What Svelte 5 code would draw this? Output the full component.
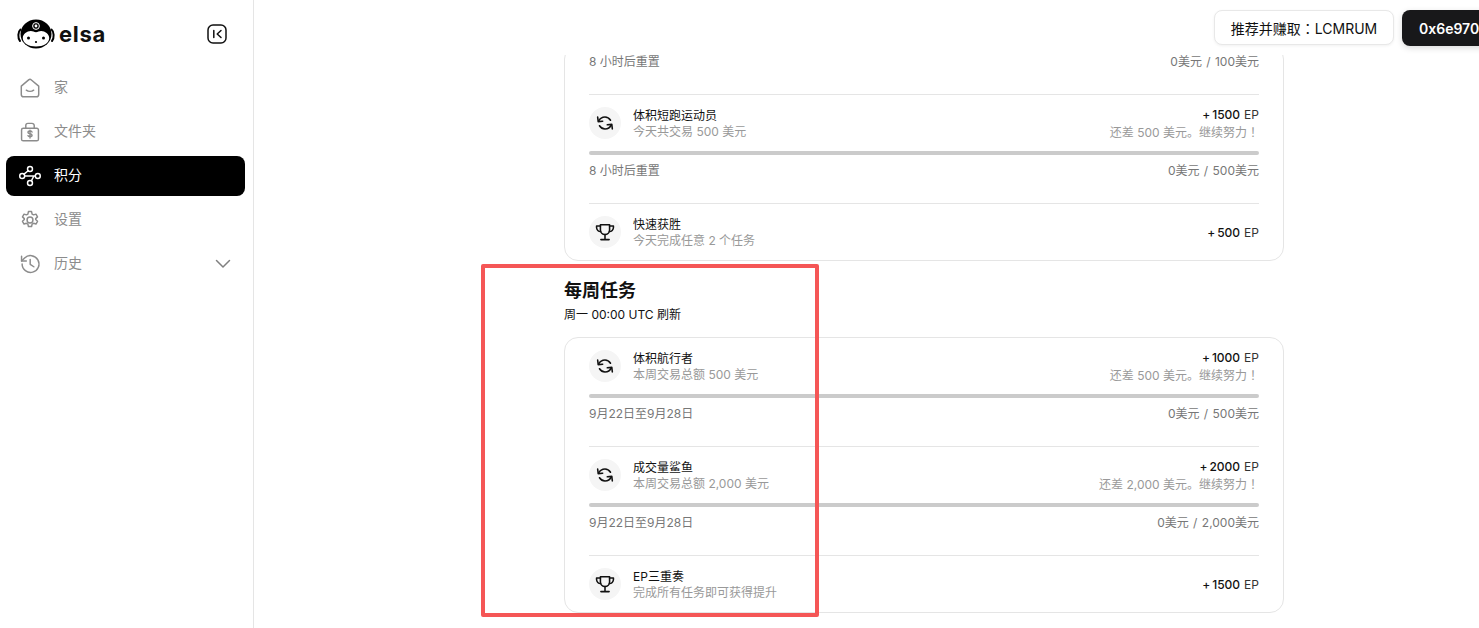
<script>
  const navItems = [
    { key: 'home', label: '家' },
    { key: 'folder', label: '文件夹' },
    { key: 'points', label: '积分', active: true },
    { key: 'settings', label: '设置' },
    { key: 'history', label: '历史', chevron: true }
  ];

  const dailyTasks = [
    { icon: 'swap', title: '体积短跑运动员', sub: '今天共交易 500 美元', ep: '1500', hint: '还差 500 美元。继续努力', left: '8 小时后重置', right: '0美元 / 500美元' },
    { icon: 'trophy', title: '快速获胜', sub: '今天完成任意 2 个任务', ep: '500' }
  ];

  const weeklyTasks = [
    { icon: 'swap', title: '体积航行者', sub: '本周交易总额 500 美元', ep: '1000', hint: '还差 500 美元。继续努力', left: '9月22日至9月28日', right: '0美元 / 500美元' },
    { icon: 'swap', title: '成交量鲨鱼', sub: '本周交易总额 2,000 美元', ep: '2000', hint: '还差 2,000 美元。继续努力', left: '9月22日至9月28日', right: '0美元 / 2,000美元' },
    { icon: 'trophy', title: 'EP三重奏', sub: '完成所有任务即可获得提升', ep: '1500' }
  ];
</script>

{#snippet navIcon(key)}
  <svg class="nav-icon" viewBox="0 0 24 24" fill="none" stroke="currentColor" stroke-width="1.6" stroke-linecap="round" stroke-linejoin="round">
    {#if key === 'home'}
      <path d="M2.500 10 10.500 3.200a2.300 2.300 0 0 1 3 0L21.500 10V19a2.600 2.600 0 0 1-2.600 2.600H5.100A2.600 2.600 0 0 1 2.500 19Z"/>
      <path d="M8 14.400c2.200 1.700 5.800 1.700 8 0"/>
    {:else if key === 'folder'}
      <path d="M4.600 8h14.800A1.800 1.800 0 0 1 21.200 9.800v10a1.800 1.800 0 0 1-1.800 1.800H4.600a1.800 1.800 0 0 1-1.800-1.800v-10A1.800 1.800 0 0 1 4.600 8Z"/>
      <path d="M7.400 8V5a2.400 2.400 0 0 1 2.400-2.400h4.400A2.400 2.400 0 0 1 16.600 5v3"/>
      <path d="M14.200 12c-.4-.7-1.200-1-2.200-1-1.300 0-2.200.6-2.200 1.500s.9 1.300 2.200 1.500 2.200.7 2.200 1.600-.9 1.500-2.200 1.500c-1 0-1.800-.4-2.200-1.100M12 10v8.600"/>
    {:else if key === 'points'}
      <circle cx="3.500" cy="12" r="2.700"/>
      <circle cx="20.500" cy="12" r="2.700"/>
      <circle cx="12" cy="4.400" r="2.700"/>
      <circle cx="12" cy="19.600" r="2.700"/>
      <path d="M6.200 12h11.600M10 6.300 5.500 10M13.500 17.300 16.200 12"/>
    {:else if key === 'settings'}
      <path d="M10.300 2.800h3.400l.6 2.700 1.600.9 2.600-.8 1.700 3-2 1.900v1l2 1.900-1.700 3-2.600-.8-1.600.9-.6 2.700h-3.400l-.6-2.700-1.600-.9-2.600.8-1.700-3 2-1.900v-1l-2-1.900 1.700-3 2.600.8 1.600-.9Z"/>
      <circle cx="12" cy="12" r="3.200"/>
    {:else}
      <path d="M3.400 12a9.200 9.200 0 1 0 2.700-6.500L2.800 8.800"/>
      <path d="M2.800 3.600v5.200H8"/>
      <path d="M12.200 7.200v5.200l4 2.600"/>
    {/if}
  </svg>
{/snippet}

{#snippet taskIcon(kind)}
  <span class="task-icon">
    <svg viewBox="0 0 24 24" width="22" height="22" fill="none" stroke="#111" stroke-width="1.700" stroke-linecap="round" stroke-linejoin="round">
      {#if kind === 'swap'}
        <path d="M18 9C16.500 6.600 14.500 5.500 12 5.500 9 5.500 6.500 7 5 10"/>
        <path d="M4 5.500 4.600 10.500 9.500 10"/>
        <path d="M6 15C7.500 17.400 9.500 18.500 12 18.500 15 18.500 17.500 17 19 14"/>
        <path d="M20 18.500 19.400 13.500 14.500 14"/>
      {:else}
        <path d="M7 4h10v5.800a5 5 0 0 1-10 0Z"/>
        <path d="M7 5.500H2.800v1.700A4.300 4.300 0 0 0 7.300 11.500M17 5.500h4.200v1.700a4.300 4.300 0 0 1-4.500 4.300"/>
        <path d="M12 14.800v5M7.500 20.300h9"/>
      {/if}
    </svg>
  </span>
{/snippet}

{#snippet taskRow(task)}
  <div class="task">
    <div class="task-head">
      {@render taskIcon(task.icon)}
      <div class="task-text">
        <div class="task-title">{task.title}</div>
        <div class="task-sub">{task.sub}</div>
      </div>
      <div class="task-reward">
        <div class="ep"><span class="ep-plus">+</span><span class="ep-num">{task.ep}</span><span class="ep-unit">EP</span></div>
        {#if task.hint}<div class="hint">{task.hint}<span class="tc">！</span></div>{/if}
      </div>
    </div>
    {#if task.left}
      <div class="bar"></div>
      <div class="task-foot">
        <span>{task.left}</span>
        <span class="amount">{task.right}</span>
      </div>
    {/if}
  </div>
{/snippet}

<div class="page">
  <aside class="sidebar">
    <div class="brand">
      <svg class="logo" viewBox="0 0 38 30" width="38" height="30">
        <path d="M3.500 10.500C1 12.500.5 19 3 22" fill="none" stroke="#000" stroke-width="2" stroke-linecap="round"/>
        <path d="M34.500 10.500C37 12.500 37.500 19 35 22" fill="none" stroke="#000" stroke-width="2" stroke-linecap="round"/>
        <ellipse cx="19" cy="15" rx="15.500" ry="14.500" fill="#000"/>
        <path d="M5.800 19c0-4 4.200-7 8-7 2 0 3.500 1.200 5.200 1.200S22.200 12 24.200 12c3.800 0 8 3 8 7 0 5-5.800 8.500-13.200 8.500S5.800 24 5.800 19Z" fill="#fff"/>
        <circle cx="19" cy="7" r="3.400" fill="none" stroke="#fff" stroke-width="1"/>
        <circle cx="19" cy="7" r="1.400" fill="#fff"/>
        <circle cx="11.500" cy="19" r="1.500" fill="#000"/>
        <circle cx="26.500" cy="19" r="1.500" fill="#000"/>
        <circle cx="19" cy="23" r="1.100" fill="#000"/>
      </svg>
      <span class="wordmark">elsa</span>
      <button type="button" class="collapse" aria-label="Collapse sidebar">
        <svg viewBox="0 0 20 20" width="20" height="20" fill="none" stroke="#111" stroke-width="1.500" stroke-linecap="round" stroke-linejoin="round">
          <rect x="1" y="1" width="18" height="18" rx="5"/>
          <path d="M6.800 6.500v7M14 6.500 10.200 10l3.800 3.500"/>
        </svg>
      </button>
    </div>
    <nav class="nav">
      {#each navItems as item}
        <div class="nav-item" class:active={item.active}>
          {@render navIcon(item.key)}
          <span>{item.label}</span>
          {#if item.chevron}
            <svg class="chevron" viewBox="0 0 16 10" width="16" height="10" fill="none" stroke="#808080" stroke-width="1.500" stroke-linecap="round" stroke-linejoin="round"><path d="M1.500 1.500 8 8l6.500-6.500"/></svg>
          {/if}
        </div>
      {/each}
    </nav>
  </aside>

  <main class="main">
    <header class="topbar">
      <button type="button" class="btn-ref">推荐并赚取<span class="tc">：</span>LCMRUM</button>
      <button type="button" class="btn-wallet">0x6e970</button>
    </header>
    <div class="scroll">
      <section class="card card-cut">
        <div class="task">
          <div class="task-foot">
            <span>8 小时后重置</span>
            <span class="amount">0美元 / 100美元</span>
          </div>
        </div>
        {#each dailyTasks as task}
          {@render taskRow(task)}
        {/each}
      </section>

      <h2 class="section-title">每周任务</h2>
      <p class="section-sub">周一 00:00 UTC 刷新</p>

      <section class="card">
        {#each weeklyTasks as task}
          {@render taskRow(task)}
        {/each}
      </section>
    </div>
  </main>

  <div class="highlight"></div>
</div>

<style>
  :global(body) {
    margin: 0;
    overflow: hidden;
    background: #fff;
    font-family: Inter, "Noto Sans CJK SC", sans-serif;
  }

  .page {
    position: relative;
    display: flex;
    width: 1479px;
    height: 628px;
    overflow: hidden;
    color: #111;
  }

  /* full-width punctuation sits centred in the reference */
  .tc { font-family: "Noto Sans CJK TC", sans-serif; }

  .sidebar {
    flex: none;
    box-sizing: border-box;
    width: 254px;
    border-right: 1px solid #e5e5e5;
    padding: 18px 8px 0 6px;
  }
  .brand {
    display: flex;
    align-items: center;
    height: 32px;
    padding-left: 11px;
  }
  .logo { flex: none; }
  .wordmark {
    margin-left: 4px;
    font-size: 22px;
    font-weight: 700;
    letter-spacing: 0.7px;
    color: #111;
  }
  .collapse {
    margin-left: auto;
    margin-right: 18px;
    padding: 0;
    border: none;
    background: none;
    display: flex;
  }

  .nav {
    display: flex;
    flex-direction: column;
    gap: 4px;
    margin-top: 18px;
  }
  .nav-item {
    display: flex;
    align-items: center;
    height: 40px;
    padding: 0 14px 0 13px;
    border-radius: 8px;
    font-size: 14px;
    line-height: 18px;
    color: #8c8c8c;
  }
  .nav-item > span { margin-top: -2px; }
  .nav-item.active {
    background: #000;
    color: #fff;
  }
  .nav-icon {
    flex: none;
    width: 22px;
    height: 22px;
    margin-right: 13px;
  }
  .chevron { margin-left: auto; }

  .main {
    flex: 1;
    min-width: 0;
    display: flex;
    flex-direction: column;
  }
  .topbar {
    flex: none;
    display: flex;
    align-items: flex-start;
    height: 55px;
    box-sizing: border-box;
    padding: 10px 0 0 960px;
    gap: 8px;
  }
  .btn-ref, .btn-wallet {
    flex: none;
    font: inherit;
    font-size: 14px;
    border-radius: 8px;
  }
  .btn-ref {
    width: 180px;
    height: 35px;
    padding: 0;
    border: 1px solid #e8e8e8;
    background: #fff;
    color: #111;
    box-shadow: 0 1px 3px rgba(0, 0, 0, 0.06);
  }
  .btn-wallet {
    width: 100px;
    height: 36px;
    padding: 0 0 0 17px;
    text-align: left;
    border: none;
    background: #18181a;
    color: #fff;
    font-weight: 600;
    box-shadow: 0 2px 6px rgba(0, 0, 0, 0.15);
  }

  .scroll {
    flex: 1;
    min-height: 0;
    overflow: hidden;
    padding-left: 310px;
  }

  .card {
    box-sizing: border-box;
    width: 720px;
    border: 1px solid #e5e5e5;
    border-radius: 14px;
    padding: 0 24px;
  }
  .card-cut {
    margin-top: -10px;
  }

  .task {
    padding: 12px 0 23px;
    border-top: 1px solid #e5e5e5;
  }
  .task:first-child { border-top: none; }
  .task:last-child { padding-bottom: 12px; }
  .card-cut .task:first-child { padding: 0 0 23px; }

  .task-head {
    display: flex;
    align-items: center;
    height: 32px;
  }
  .task-icon {
    flex: none;
    display: flex;
    align-items: center;
    justify-content: center;
    width: 32px;
    height: 32px;
    border-radius: 50%;
    background: #f5f5f5;
  }
  .task-text {
    margin-left: 12px;
    padding-top: 1px;
  }
  .task-title {
    font-size: 12px;
    line-height: 16px;
    color: #111;
  }
  .task-sub {
    font-size: 12px;
    line-height: 16px;
    color: #999;
  }
  .task-reward {
    margin-left: auto;
    padding-top: 1px;
    text-align: right;
  }
  .ep {
    font-size: 12px;
    line-height: 16px;
    color: #111;
  }
  .ep-plus { margin-right: 2px; font-weight: 500; }
  .ep-num { font-weight: 500; }
  .ep-unit { margin-left: 4px; color: #333; }
  .hint {
    font-size: 12px;
    line-height: 16px;
    color: #999;
    margin-top: 1px;
  }
  .bar {
    height: 4px;
    margin-top: 12px;
    border-radius: 2px;
    background: #cbcbcb;
  }
  .task-foot {
    display: flex;
    justify-content: space-between;
    margin-top: 7px;
    font-size: 12px;
    line-height: 18px;
    color: #777;
  }
  .amount { word-spacing: 1px; }

  .section-title {
    margin: 18px 0 0;
    font-size: 18px;
    line-height: 24px;
    font-weight: 700;
    color: #111;
  }
  .section-sub {
    margin: 3px 0 0;
    font-size: 12px;
    line-height: 18px;
    color: #111;
  }
  .section-sub + .card {
    margin-top: 13px;
  }

  .highlight {
    position: absolute;
    left: 481px;
    top: 264px;
    box-sizing: border-box;
    width: 338px;
    height: 353px;
    border: 4px solid #f55656;
    border-radius: 2px;
    pointer-events: none;
  }
</style>
